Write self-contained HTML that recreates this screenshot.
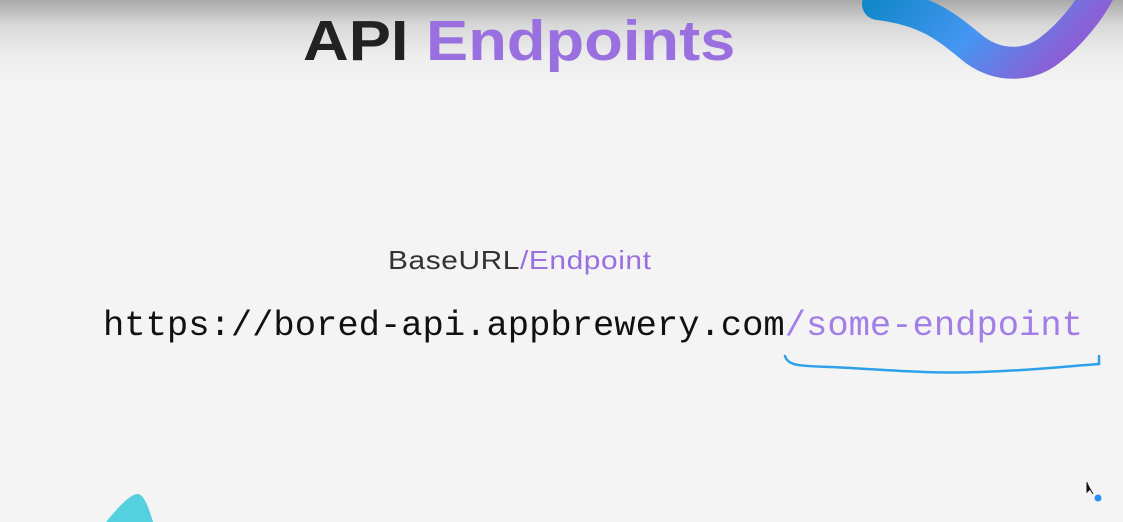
<!DOCTYPE html>
<html><head><style>
html,body{margin:0;padding:0}
body{width:1123px;height:522px;overflow:hidden;position:relative;background:linear-gradient(#a9a9a9 0px,#d8d8d8 25px,#ededed 55px,#f4f4f4 85px,#f4f4f4 100%);font-family:"Liberation Sans",sans-serif}
.t{position:absolute;left:303px;top:8px;font-size:57px;font-weight:bold;color:#222;white-space:nowrap;transform:scaleX(1.11);transform-origin:left top}
.p{color:#9a6fe0}
.b{position:absolute;left:388px;top:245px;font-size:26px;color:#333;white-space:nowrap;letter-spacing:0.5px;transform:scaleX(1.15);transform-origin:left top}
.u{position:absolute;left:103px;top:305px;font-family:"Liberation Mono",monospace;font-size:35.5px;color:#111;white-space:nowrap}
.u span{color:#a27ee6}
</style></head><body>
<svg width="1123" height="522" style="position:absolute;left:0;top:0">
<defs><linearGradient id="g" x1="0" y1="0" x2="1" y2="0.3">
<stop offset="0" stop-color="#1187c9"/><stop offset="0.55" stop-color="#4596f2"/><stop offset="1" stop-color="#8a60d6"/></linearGradient></defs>
<path d="M878 4 C930 10,950 30,975 50 C1000 68,1030 66,1050 50 C1070 35,1090 10,1100 -10" fill="none" stroke="url(#g)" stroke-width="32" stroke-linecap="round"/>
<path d="M106 522 C120 505,130 495,137 494 C143 493,148 505,153 522 Z" fill="#55d0de"/>
<path d="M785 356 C788 366,800 366,830 367 C880 369,920 374,980 372 C1040 370,1070 366,1099 364 L1099 356" fill="none" stroke="#2ea0ea" stroke-width="2.5" stroke-linecap="round"/>
<circle cx="1098" cy="498" r="3.5" fill="#2a8ef0"/>
<path d="M1087 482 L1087 492 L1090 489 L1093 494" fill="#111" stroke="#111" stroke-width="1"/>
</svg>
<div class="t">API <span class="p">Endpoints</span></div>
<div class="b">BaseURL<span style="color:#9a6fe0">/Endpoint</span></div>
<div class="u">https://bored-api.appbrewery.com<span>/some-endpoint</span></div>
</body></html>
